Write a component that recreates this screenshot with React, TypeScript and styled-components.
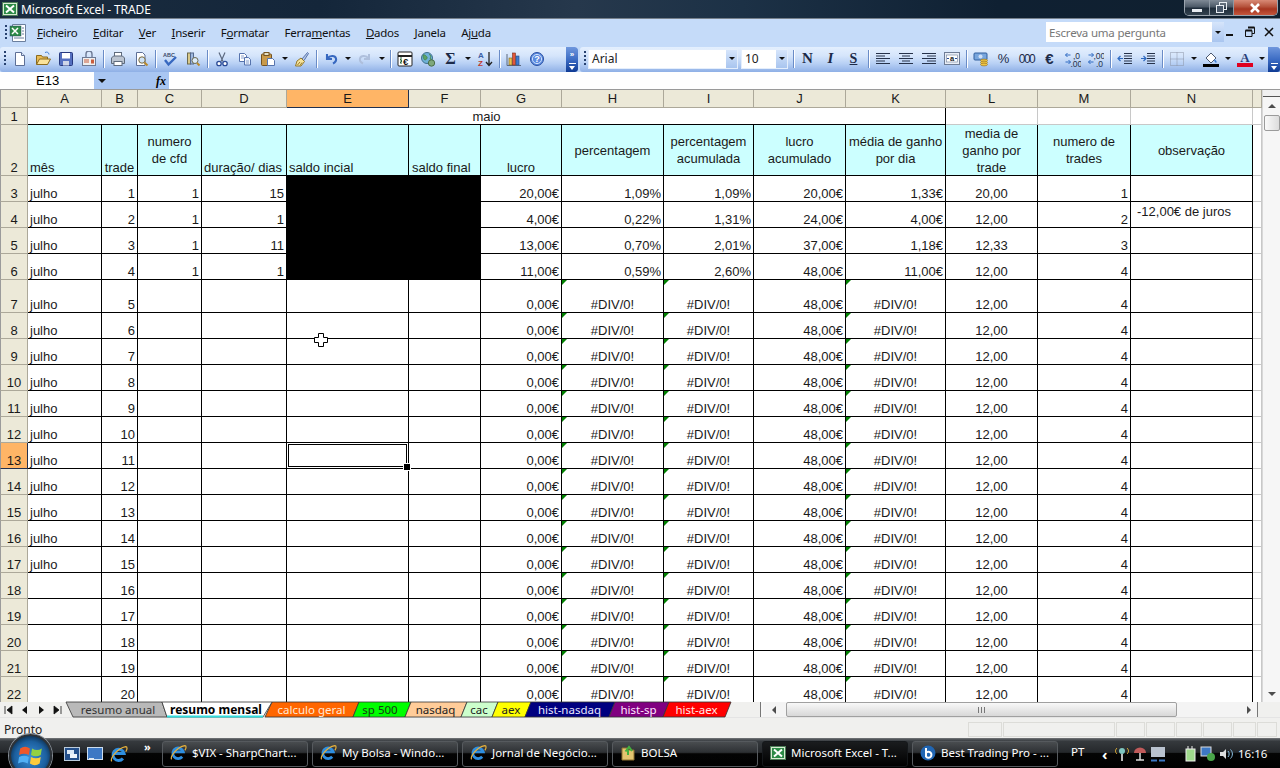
import * as React from 'react';
import styled, { createGlobalStyle } from 'styled-components';

const UI_FONT = '"Noto Sans", "DejaVu Sans", sans-serif';
const CELL_FONT = '"Liberation Sans", Arial, sans-serif';

const GlobalStyle = createGlobalStyle`
    html, body {
        margin: 0;
        padding: 0;
        background: #fff;
    }
    * {
        box-sizing: border-box;
    }
`;

const Page = styled.div`
    position: relative;
    display: flex;
    flex-direction: column;
    width: 1280px;
    height: 768px;
    overflow: hidden;
    font-family: ${UI_FONT};
    font-size: 11.5px;
    color: #000;
    background: #c3daf9;
`;

/* title bar */

const TitleBar = styled.div`
    display: flex;
    flex: none;
    align-items: center;
    height: 19px;
    padding-left: 2px;
    color: #fff;
    font-size: 12px;
    background: linear-gradient(90deg, #1a2c3f 0%, #14263a 25%, #26384c 45%, #1c3146 58%, #0f2032 78%, #10202f 100%);
    border-bottom: 1px solid #77818c;
`;

const TitleText = styled.span`
    margin-left: 3px;
    line-height: 17px;
    letter-spacing: -0.1px;
`;

const WindowButtons = styled.div`
    display: flex;
    align-self: flex-start;
    width: 94px;
    height: 16px;
    margin-left: auto;
    margin-right: 2px;
    overflow: hidden;
    border: 1px solid #9aa4ae;
    border-top: 0;
    border-radius: 0 0 5px 5px;
`;

const WindowButton = styled.div<{ $w: number; $close?: boolean }>`
    display: flex;
    align-items: center;
    justify-content: center;
    width: ${({ $w }) => $w}px;
    height: 100%;
    border-right: 1px solid #8d98a3;
    background: ${({ $close }) =>
        $close
            ? 'linear-gradient(180deg, #d88a76 0%, #b5523b 45%, #a63520 60%, #c5563c 100%)'
            : 'linear-gradient(180deg, #7f8a96 0%, #4d5a68 45%, #1e2c3a 55%, #33424f 100%)'};
    &:last-child {
        border-right: 0;
    }
`;

/* menu bar */

const MenuBar = styled.div`
    display: flex;
    flex: none;
    align-items: center;
    height: 28px;
    padding-left: 4px;
    background: #c5dbf9;
`;

const Menus = styled.div`
    display: flex;
    gap: 15.5px;
    margin-left: 8px;
    padding-bottom: 1px;
    line-height: 16px;
    letter-spacing: -0.25px;
    color: #111;
`;

const AskBox = styled.div`
    display: flex;
    align-items: center;
    justify-content: space-between;
    width: 178px;
    height: 20px;
    margin-left: auto;
    margin-bottom: 2px;
    padding-left: 3px;
    color: #777;
    font-size: 11.5px;
    letter-spacing: -0.2px;
    background: #fff;
`;

const ComboArrow = styled.div<{ $w?: number; $h?: number }>`
    display: flex;
    align-items: center;
    justify-content: center;
    width: ${({ $w }) => $w ?? 12}px;
    height: ${({ $h }) => ($h ? `${$h}px` : '100%')};
    background: linear-gradient(180deg, #d6e5fb, #a9c5ef);
    &::after {
        content: '';
        border-top: 3px solid #111;
        border-left: 3px solid transparent;
        border-right: 3px solid transparent;
    }
`;

const DocButtons = styled.div`
    display: flex;
    align-items: center;
    gap: 7px;
    margin: 0 5px 2px 1px;
`;

/* toolbars */

const ToolRow = styled.div`
    display: flex;
    flex: none;
    height: 25px;
    gap: 2px;
`;

const Toolbar = styled.div<{ $w?: number; $right?: boolean }>`
    display: flex;
    align-items: center;
    flex: ${({ $w }) => ($w ? 'none' : 1)};
    width: ${({ $w }) => ($w ? `${$w}px` : 'auto')};
    height: 25px;
    padding: 0 0 2px 3px;
    border-radius: ${({ $right }) => ($right ? '3px 0 0 3px' : '3px')};
    background: linear-gradient(180deg, #e4effe 0%, #d5e5fb 35%, #b9d1f5 65%, #8fb0e6 100%);
    overflow: hidden;
`;

const Grip = styled.div`
    flex: none;
    width: 2px;
    height: 16px;
    margin: 0 2px 0 1px;
    background: repeating-linear-gradient(180deg, #27416f 0 2px, transparent 2px 4px);
`;

const ToolButton = styled.div<{ $w?: number }>`
    display: flex;
    flex: none;
    align-items: center;
    justify-content: center;
    width: ${({ $w }) => $w ?? 23}px;
    height: 22px;
`;

const ToolText = styled(ToolButton)<{
    $font?: string;
    $size?: number;
    $bold?: boolean;
    $italic?: boolean;
    $tight?: boolean;
}>`
    font-family: ${({ $font }) => $font ?? CELL_FONT};
    font-size: ${({ $size }) => $size ?? 12}px;
    font-weight: ${({ $bold }) => ($bold ? 700 : 400)};
    font-style: ${({ $italic }) => ($italic ? 'italic' : 'normal')};
    letter-spacing: ${({ $tight }) => ($tight ? '-1.5px' : '0')};
    color: #1c2a48;
`;

const ToolSep = styled.div`
    flex: none;
    width: 1px;
    height: 18px;
    margin: 0 2.5px;
    background: #6a8cc7;
    box-shadow: 1px 0 0 #fff;
`;

const ToolDrop = styled.div`
    display: flex;
    flex: none;
    align-items: center;
    justify-content: center;
    width: 11px;
    height: 22px;
    &::after {
        content: '';
        border-top: 3px solid #111;
        border-left: 3px solid transparent;
        border-right: 3px solid transparent;
    }
`;

const ToolEnd = styled.div`
    display: flex;
    flex: none;
    flex-direction: column;
    align-items: center;
    justify-content: space-between;
    align-self: stretch;
    width: 12px;
    height: 25px;
    margin-left: auto;
    padding: 4px 0 3px;
    border-radius: 0 3px 3px 0;
    background: linear-gradient(180deg, #6f97dd 0%, #3c6cc4 50%, #0f3b94 100%);
`;

const EndChevron = styled.div`
    color: #fff;
    font: 700 8px/7px ${CELL_FONT};
`;

const EndArrow = styled.div`
    position: relative;
    width: 7px;
    height: 6px;
    border-top: 1px solid #fff;
    margin-top: auto;
    &::after {
        content: '';
        position: absolute;
        top: 2px;
        left: 0;
        border-top: 4px solid #fff;
        border-left: 3.5px solid transparent;
        border-right: 3.5px solid transparent;
    }
`;

const Combo = styled.div<{ $w: number; $gap: number }>`
    display: flex;
    flex: none;
    align-items: center;
    justify-content: space-between;
    width: ${({ $w }) => $w}px;
    height: 20px;
    margin-right: ${({ $gap }) => $gap}px;
    padding-left: 3px;
    font-size: 12px;
    color: #222;
    background: #fff;
    border: 1px solid #e4eefc;
`;

/* formula bar */

const FormulaBar = styled.div`
    display: flex;
    flex: none;
    height: 18px;
    background: #fff;
    border-bottom: 1px solid #9a9a9a;
`;

const NameBox = styled.div`
    display: flex;
    align-items: center;
    width: 94px;
    padding-left: 36px;
    font: 13px ${CELL_FONT};
`;

const NameArrow = styled.div`
    display: flex;
    align-items: center;
    width: 75px;
    padding-left: 4px;
    background: #a9c6f2;
    &::before {
        content: '';
        border-top: 4px solid #111;
        border-left: 4px solid transparent;
        border-right: 4px solid transparent;
    }
`;

const Fx = styled.span`
    margin-left: 50px;
    font: italic 700 12px/16px "Liberation Serif", serif;
`;

/* sheet */

const SheetArea = styled.div`
    display: flex;
    flex: none;
    height: 612px;
    background: #fff;
`;

const SheetGrid = styled.div`
    display: grid;
    flex: 1;
    height: 612px;
    overflow: hidden;
    grid-template-columns: 28px 74px 36px 64px 85px 122px 72px 81px 102px 90px 92px 100px 92px 93px 122px 9px;
    grid-template-rows: 18px 17px 51px repeat(4, 26px) 33px repeat(15, 26px);
    font: 13px/17px ${CELL_FONT};
    color: #1a1a1a;
`;

const Corner = styled.div`
    background: #ece9d8;
    border-right: 1px solid #aca899;
    border-bottom: 1px solid #aca899;
    border-left: 1px solid #9b9b9b;
`;

const ColHead = styled.div<{ $active?: boolean }>`
    display: flex;
    align-items: center;
    justify-content: center;
    background: ${({ $active }) => ($active ? '#ffb566' : '#ece9d8')};
    border-right: 1px solid ${({ $active }) => ($active ? '#21304f' : '#aca899')};
    border-bottom: 1px solid ${({ $active }) => ($active ? '#21304f' : '#aca899')};
    line-height: 16px;
`;

const RowHead = styled.div<{ $active?: boolean }>`
    display: flex;
    align-items: flex-end;
    justify-content: center;
    line-height: 15px;
    background: ${({ $active }) => ($active ? '#ffb566' : '#ece9d8')};
    border-right: 1px solid ${({ $active }) => ($active ? '#21304f' : '#aca899')};
    border-bottom: 1px solid ${({ $active }) => ($active ? '#21304f' : '#aca899')};
    border-left: 1px solid #9b9b9b;
`;

const Cell = styled.div<{
    $h?: 'left' | 'center' | 'right';
    $v?: 'top' | 'middle' | 'bottom';
    $fill?: string;
    $grey?: boolean;
    $span?: number;
    $flag?: boolean;
    $indent?: number;
}>`
    position: relative;
    display: flex;
    align-items: ${({ $v }) => ($v === 'middle' ? 'center' : $v === 'top' ? 'flex-start' : 'flex-end')};
    justify-content: ${({ $h }) => ($h === 'center' ? 'center' : $h === 'right' ? 'flex-end' : 'flex-start')};
    grid-column: span ${({ $span }) => $span ?? 1};
    padding: ${({ $v }) => ($v === 'top' ? '1px' : '0')} 2px 0 ${({ $indent }) => $indent ?? 2}px;
    line-height: ${({ $v }) => ($v ? 17 : 15)}px;
    text-align: center;
    white-space: pre;
    background: ${({ $fill }) => $fill ?? '#fff'};
    border-right: 1px solid ${({ $grey }) => ($grey ? '#c8c8c8' : '#000')};
    border-bottom: 1px solid ${({ $grey }) => ($grey ? '#c8c8c8' : '#000')};

    ${({ $flag }) =>
        $flag
            ? `&::before {
        content: '';
        position: absolute;
        top: 0;
        left: 0;
        border-top: 5px solid #008000;
        border-right: 5px solid transparent;
    }`
            : ''}
`;

const Selection = styled.div`
    position: absolute;
    top: 1px;
    left: 1px;
    right: 1px;
    bottom: 1px;
    border: 1px solid #000;
    box-shadow: 0 0 0 1px #fff;
    z-index: 2;
    &::after {
        content: '';
        position: absolute;
        right: -5px;
        bottom: -5px;
        width: 6px;
        height: 6px;
        background: #000;
        border: 1px solid #fff;
    }
`;

const Pointer = styled.svg`
    position: absolute;
    left: 313px;
    top: 332px;
    z-index: 3;
`;

const VScroll = styled.div`
    display: flex;
    flex: none;
    flex-direction: column;
    align-items: center;
    width: 18px;
    height: 612px;
    background: #f6f6f6;
    border-left: 1px solid #d8d8d8;
`;

const SplitBox = styled.div`
    width: 100%;
    height: 7px;
    background: #f0f0f0;
    border-bottom: 1px solid #555;
`;

const ScrollArrow = styled.div<{ $dir: 'up' | 'down' | 'left' | 'right' }>`
    display: flex;
    flex: none;
    align-items: center;
    justify-content: center;
    width: 17px;
    height: 17px;
    &::after {
        content: '';
        ${({ $dir }) =>
            $dir === 'up'
                ? 'border-bottom: 4px solid #4d4d4d; border-left: 4px solid transparent; border-right: 4px solid transparent;'
                : $dir === 'down'
                  ? 'border-top: 4px solid #4d4d4d; border-left: 4px solid transparent; border-right: 4px solid transparent;'
                  : $dir === 'left'
                    ? 'border-right: 4px solid #4d4d4d; border-top: 4px solid transparent; border-bottom: 4px solid transparent;'
                    : 'border-left: 4px solid #4d4d4d; border-top: 4px solid transparent; border-bottom: 4px solid transparent;'}
    }
`;

const VThumb = styled.div`
    flex: none;
    width: 16px;
    height: 16px;
    margin-top: 1px;
    border: 1px solid #9b9b9b;
    border-radius: 2px;
    background: linear-gradient(90deg, #fafafa, #dcdcdc);
`;

const VSpacer = styled.div`
    flex: 1;
`;

/* tabs and horizontal scrollbar */

const TabRow = styled.div`
    display: flex;
    flex: none;
    align-items: stretch;
    height: 16px;
    background: #f0f0ee;
    border-bottom: 1px solid #e4e4e4;
`;

const TabNav = styled.div`
    display: flex;
    flex: none;
    align-items: center;
    width: 66px;
    padding-left: 1px;
`;

const NavButton = styled.svg`
    flex: none;
    width: 16px;
    height: 10px;
`;

const Tab = styled.div<{ $w: number; $shift: number; $color: string; $active?: boolean }>`
    position: relative;
    display: flex;
    flex: none;
    align-items: center;
    justify-content: center;
    width: ${({ $w }) => $w}px;
    padding-left: ${({ $shift }) => Math.max($shift, 0)}px;
    padding-right: ${({ $shift }) => Math.max(-$shift, 0)}px;
    font-size: ${({ $active }) => ($active ? 12 : 11.5)}px;
    font-weight: ${({ $active }) => ($active ? 700 : 400)};
    line-height: 15px;
    color: ${({ $color }) => $color};
    z-index: ${({ $active }) => ($active ? 1 : 0)};
    white-space: nowrap;
`;

const TabLabel = styled.span`
    position: relative;
`;

const TabShape = styled.svg`
    position: absolute;
    top: 0;
    left: 0;
    overflow: visible;
`;

const TabFill = styled.div`
    flex: 1;
`;

const Splitter = styled.div`
    flex: none;
    width: 3px;
    background: #f7f7f7;
    border-left: 1px solid #777;
`;

const HScroll = styled.div`
    display: flex;
    flex: none;
    align-items: center;
    width: 494px;
    padding-left: 2px;
    background: #f4f4f4;
`;

const HThumb = styled.div`
    display: flex;
    flex: none;
    align-items: center;
    justify-content: center;
    width: 391px;
    height: 15px;
    margin-left: 4px;
    border: 1px solid #a0a0a0;
    border-radius: 2px;
    background: linear-gradient(180deg, #f8f8f8, #d8d8d8);
`;

const ThumbGrip = styled.div`
    width: 7px;
    height: 6px;
    background: repeating-linear-gradient(90deg, #777 0 1px, transparent 1px 3px);
`;

const HTrackFill = styled.div`
    flex: 1;
`;

const ResizeBox = styled.div`
    display: flex;
    flex: none;
    width: 23px;
    border-left: 1px solid #777;
    background: #f0f0ee;
`;

/* status bar */

const StatusBar = styled.div`
    display: flex;
    flex: none;
    align-items: flex-end;
    height: 20px;
    padding: 0 3px 1px 4px;
    font-size: 12px;
    background: #f0f0ee;
`;

const StatusText = styled.span`
    margin-right: auto;
    margin-bottom: -1px;
    line-height: 16px;
    color: #222;
`;

const StatusPanel = styled.div<{ $w: number }>`
    flex: none;
    width: ${({ $w }) => $w}px;
    height: 15px;
    margin-left: 1px;
    border: 1px solid #dcdcd8;
`;

/* taskbar */

const Taskbar = styled.div`
    position: relative;
    display: flex;
    flex: none;
    align-items: center;
    height: 30px;
    padding-left: 64px;
    color: #fff;
    font-size: 11.5px;
    background: linear-gradient(180deg, #585c60 0%, #35393d 8%, #25282b 46%, #050505 50%, #000 100%);
    border-top: 1px solid #6a6d70;
`;

const StartOrb = styled.div`
    position: absolute;
    left: 9px;
    top: -5px;
    display: flex;
    align-items: center;
    justify-content: center;
    width: 43px;
    height: 43px;
    border-radius: 50%;
    border: 2px solid #2c3238;
    box-shadow: 0 0 0 1px #8a929a;
    background: radial-gradient(circle at 50% 55%, #3a8fd8 0%, #1c5f9e 55%, #0b2a47 80%, #0e1a26 100%);
`;

const QuickLaunch = styled.div`
    display: flex;
    flex: none;
    align-items: center;
    gap: 7px;
    width: 98px;
`;

const Chevrons = styled.span`
    margin-left: 9px;
    font-size: 11px;
    font-weight: 700;
    line-height: 10px;
    transform: translateY(-7px);
`;

const TaskButton = styled.div<{ $active?: boolean }>`
    display: flex;
    flex: none;
    align-items: center;
    gap: 5px;
    width: 146px;
    height: 26px;
    margin-right: 4px;
    padding: 0 0 2px 7px;
    white-space: nowrap;
    border: 1px solid ${({ $active }) => ($active ? '#15181b' : '#565a5e')};
    border-radius: 3px;
    background: ${({ $active }) =>
        $active
            ? 'linear-gradient(180deg, #1a1c1e, #000)'
            : 'linear-gradient(180deg, rgba(255,255,255,0.1) 0%, rgba(255,255,255,0.03) 48%, rgba(0,0,0,0.2) 52%, rgba(0,0,0,0.2) 100%)'};
`;

const Tray = styled.div`
    display: flex;
    flex: 1;
    align-items: center;
    margin-left: 9px;
`;

const TrayLang = styled.span`
    width: 31px;
    transform: translateY(-2px);
`;

const TrayBack = styled.span`
    width: 12px;
    font-size: 15px;
    font-weight: 700;
`;

const TrayIcons = styled.div<{ $w: number }>`
    display: flex;
    flex: none;
    gap: 2px;
    width: ${({ $w }) => $w}px;
`;

const Clock = styled.span`
    margin-left: 2px;
`;

/* drawings */

const Svg = ({ children, size = 16 }: { children: React.ReactNode; size?: number }) => (
    <svg width={size} height={size} viewBox="0 0 16 16">
        {children}
    </svg>
);

const ExcelLogo = ({ size = 16 }: { size?: number }) => (
    <Svg size={size}>
        <rect x="0.5" y="1.5" width="15" height="13" fill="#d7ecd2" stroke="#4f7f5a" />
        <rect x="2" y="3" width="12" height="10" fill="#2c8a46" />
        <path d="M4 4.5 L12 11.5 M12 4.5 L4 11.5" stroke="#fff" strokeWidth="2" />
    </Svg>
);

const IeLogo = ({ size = 16 }: { size?: number }) => (
    <Svg size={size}>
        <path d="M3 7.5 H12.5 A5 5 0 1 0 11.5 12" fill="none" stroke="#2f8fe0" strokeWidth="2.6" />
        <path d="M1.5 14.5 C0 12 6 3 14 1.5 C15.5 1.5 15.5 3.5 14 6" fill="none" stroke="#e7b23d" strokeWidth="1.1" />
    </Svg>
);

const ExcelDocIcon = () => (
    <svg width="20" height="20" viewBox="0 0 20 20">
        <path d="M3.5 1.5h13v17h-13z" fill="#fff" stroke="#6b7f9e" />
        <rect x="1" y="3" width="11" height="10" fill="#2c8a46" stroke="#246" strokeWidth="0.5" />
        <path d="M3 5l6 6M9 5l-6 6" stroke="#fff" strokeWidth="1.5" />
        <path d="M13 5h2M13 8h2M13 11h2M5 15h10" stroke="#6b7f9e" />
    </svg>
);

const icons: Record<string, React.ReactNode> = {
    newDoc: (
        <>
            <path d="M3.5 1.5h6l3 3v10h-9z" fill="#fff" stroke="#5d6f96" />
            <path d="M9.5 1.5v3h3" fill="#dfe8f7" stroke="#5d6f96" />
        </>
    ),
    open: (
        <>
            <path d="M1.5 4.5h5l1 1.5h5v7h-11z" fill="#e9bb56" stroke="#8a6a1d" />
            <path d="M1.5 13.5l3-5.5h11l-3 5.5z" fill="#fbe39a" stroke="#8a6a1d" />
            <path d="M10 1.5c2-1 4 0 4 2" fill="none" stroke="#3e7bd0" />
        </>
    ),
    save: (
        <>
            <rect x="1.5" y="1.5" width="13" height="13" rx="1" fill="#5570c0" stroke="#27397f" />
            <rect x="4" y="2" width="8" height="5.5" fill="#fff" />
            <rect x="5" y="10" width="6" height="4.5" fill="#cfd6e8" />
        </>
    ),
    mail: (
        <>
            <path d="M5 6V3a3 3 0 0 1 6 0v3" fill="none" stroke="#6d7a94" strokeWidth="1.4" />
            <rect x="1.5" y="6.5" width="13" height="8" fill="#eee" stroke="#6d7a94" />
            <path d="M3 9h5M3 11h5" stroke="#c95d3d" />
            <rect x="10" y="8.5" width="3" height="4" fill="#c95d3d" />
        </>
    ),
    print: (
        <>
            <rect x="4.5" y="1.5" width="7" height="5" fill="#fff" stroke="#5f6b7c" />
            <path d="M1.5 7l2-2h9l2 2v5.5h-13z" fill="#bcc5d1" stroke="#5f6b7c" />
            <rect x="4" y="10.5" width="8" height="4" fill="#fff" stroke="#5f6b7c" />
        </>
    ),
    preview: (
        <>
            <path d="M3.5 1.5h6l2.5 2.5v10.5h-8.5z" fill="#fff" stroke="#5d6f96" />
            <circle cx="9" cy="9" r="3.2" fill="#cfe3f7" stroke="#7b6a3b" />
            <path d="M11.5 11.5l3 3" stroke="#b98a2b" strokeWidth="2" />
        </>
    ),
    spell: (
        <>
            <text x="1" y="5.5" fontFamily={CELL_FONT} fontSize="5.5" fontWeight="700" fill="#3a4a6a">
                ABC
            </text>
            <path d="M3 9l3.5 4.5L14 6" fill="none" stroke="#3768c0" strokeWidth="2.4" />
        </>
    ),
    research: (
        <>
            <rect x="2.5" y="2" width="3" height="11" fill="#d8c98a" stroke="#6d6a4d" />
            <rect x="5.5" y="2" width="3" height="11" fill="#9fb9df" stroke="#55698d" />
            <circle cx="10" cy="9.5" r="3" fill="#dcebf9" stroke="#6d6a4d" />
            <path d="M12 12l2.5 2.5" stroke="#b98a2b" strokeWidth="2" />
        </>
    ),
    cut: (
        <>
            <path d="M5 1.5l4 9M11 1.5l-4 9" stroke="#5d6a80" strokeWidth="1.2" />
            <circle cx="5" cy="12.5" r="2.2" fill="#fff" stroke="#2a4a96" strokeWidth="1.3" />
            <circle cx="11" cy="12.5" r="2.2" fill="#fff" stroke="#2a4a96" strokeWidth="1.3" />
        </>
    ),
    copy: (
        <>
            <path d="M2.5 2.5h5l2 2v6h-7z" fill="#fff" stroke="#5673ad" />
            <path d="M7.5 6.5h4l2 2v5.5h-6z" fill="#eef4fd" stroke="#5673ad" />
            <path d="M4 5h3M4 7h3M9 10h3M9 12h3" stroke="#8aa1cc" />
        </>
    ),
    paste: (
        <>
            <rect x="1.5" y="3" width="10" height="11.5" rx="1" fill="#c99a4b" stroke="#745320" />
            <rect x="4" y="1.5" width="5" height="3" fill="#e6e0c6" stroke="#745320" />
            <path d="M7.5 7.5h5l2 2v5h-7z" fill="#fff" stroke="#5673ad" />
        </>
    ),
    painter: (
        <>
            <path d="M8 8L13.5 1.5l1 1L10 9.5" fill="#b6c7e4" stroke="#5673ad" />
            <path d="M3 10l4-3 3.5 3.5-3.5 4.5H1.5z" fill="#f6e39a" stroke="#94782c" />
            <path d="M3.5 14l2.5-3M6 14.5l2-3" stroke="#94782c" />
        </>
    ),
    undo: (
        <path d="M4 3v5h5M4.5 7.5c2-3 7.5-3.5 8.5 0 .6 2.4-1 4-3 5" fill="none" stroke="#3768c0" strokeWidth="2.1" />
    ),
    redo: (
        <path d="M12 3v5H7M11.5 7.5c-2-3-7.5-3.5-8.5 0-.6 2.4 1 4 3 5" fill="none" stroke="#aebfdc" strokeWidth="2" />
    ),
    euroDoc: (
        <>
            <rect x="1" y="1" width="14" height="14" rx="1" fill="#fff" stroke="#222" />
            <path d="M1 5h14" stroke="#222" strokeWidth="2" />
            <text x="6" y="14" fontFamily={CELL_FONT} fontSize="9.5" fontWeight="700" fill="#111">
                €
            </text>
            <path d="M3 8l2 2-2 2M4 6v7" fill="none" stroke="#2d6b42" />
        </>
    ),
    globe: (
        <>
            <circle cx="7" cy="7" r="5.5" fill="#6fb2d8" stroke="#3f6f8d" />
            <path d="M3 4c2-1 3 1 4 2s-1 3-2 3-2-2-2-5zM9 3l2 2-1 3 2 1" fill="#5aa364" stroke="#3d7a48" strokeWidth="0.6" />
            <circle cx="11.5" cy="12" r="3.2" fill="#7fa87b" stroke="#4a6e4a" />
        </>
    ),
    sort: (
        <>
            <text x="1" y="7" fontFamily={CELL_FONT} fontSize="8" fontWeight="700" fill="#3a5fa6">
                A
            </text>
            <text x="1" y="15" fontFamily={CELL_FONT} fontSize="8" fontWeight="700" fill="#c0392b">
                Z
            </text>
            <path d="M12 1v13M9 11l3 3.5 3-3.5" fill="none" stroke="#222" strokeWidth="1.3" />
        </>
    ),
    chart: (
        <>
            <path d="M1 14.5h14" stroke="#5d6a80" />
            <path d="M1 14.5V3" stroke="#5d6a80" />
            <rect x="3" y="7" width="3" height="7" fill="#e9c04e" stroke="#7a6320" strokeWidth="0.6" />
            <rect x="6.5" y="2" width="3" height="12" fill="#e2563a" stroke="#7a2d1a" strokeWidth="0.6" />
            <rect x="10" y="5" width="3" height="9" fill="#3e7bd0" stroke="#244c86" strokeWidth="0.6" />
        </>
    ),
    help: (
        <>
            <circle cx="8" cy="8" r="6.5" fill="#5b8be0" stroke="#2a4fa0" />
            <circle cx="8" cy="8" r="4.6" fill="none" stroke="#cfe0fb" />
            <text x="8" y="11" textAnchor="middle" fontFamily={CELL_FONT} fontSize="9" fontWeight="700" fill="#fff">
                ?
            </text>
        </>
    ),
    alignLeft: <path d="M1 2.5h14M1 5h9M1 7.5h14M1 10h9M1 12.5h14" stroke="#26324a" />,
    alignCenter: <path d="M1 2.5h14M4 5h8M1 7.5h14M4 10h8M1 12.5h14" stroke="#26324a" />,
    alignRight: <path d="M1 2.5h14M6 5h9M1 7.5h14M6 10h9M1 12.5h14" stroke="#26324a" />,
    merge: (
        <>
            <rect x="0.5" y="1.5" width="15" height="12" fill="#e9eef7" stroke="#6f7d96" />
            <rect x="2.5" y="4" width="11" height="7" fill="#fff" stroke="#6f7d96" strokeWidth="0.6" />
            <text x="8" y="10" textAnchor="middle" fontFamily={CELL_FONT} fontSize="7.5" fontWeight="700" fill="#222">
                a
            </text>
            <path d="M3 7.5h2M11 7.5h2" stroke="#2a4a96" />
        </>
    ),
    currency: (
        <>
            <rect x="1" y="2" width="13" height="7" rx="1" fill="#78a6dd" stroke="#305f9e" />
            <circle cx="7.5" cy="5.5" r="2" fill="#cfe0f7" />
            <ellipse cx="11" cy="9.5" rx="3.5" ry="1.4" fill="#f0c445" stroke="#8d6b17" strokeWidth="0.6" />
            <ellipse cx="11" cy="11.5" rx="3.5" ry="1.4" fill="#f0c445" stroke="#8d6b17" strokeWidth="0.6" />
            <ellipse cx="11" cy="13.5" rx="3.5" ry="1.4" fill="#f0c445" stroke="#8d6b17" strokeWidth="0.6" />
        </>
    ),
    incDecimal: (
        <>
            <path d="M0.5 4h5M2.500 2L0.500 4l2 2" fill="none" stroke="#2f6bc2" />
            <path d="M0.5 11h5M3.500 9l2 2-2 2" fill="none" stroke="#2f6bc2" />
            <text x="8" y="7.500" fontFamily={CELL_FONT} fontSize="8.5" fill="#26324a">
                ,0
            </text>
            <text x="5.500" y="15.500" fontFamily={CELL_FONT} fontSize="8.5" fill="#26324a">
                ,00
            </text>
        </>
    ),
    decDecimal: (
        <>
            <path d="M0.5 4h5M3.500 2l2 2-2 2" fill="none" stroke="#2f6bc2" />
            <path d="M0.5 11h5M2.500 9L0.500 11l2 2" fill="none" stroke="#2f6bc2" />
            <text x="5.500" y="7.500" fontFamily={CELL_FONT} fontSize="8.5" fill="#26324a">
                ,00
            </text>
            <text x="8" y="15.500" fontFamily={CELL_FONT} fontSize="8.5" fill="#26324a">
                ,0
            </text>
        </>
    ),
    outdent: (
        <>
            <path d="M7 2.5h8M7 5h8M7 7.5h8M7 10h8M7 12.5h8" stroke="#26324a" />
            <path d="M6 7.5H1M3.5 5L1 7.5 3.5 10" fill="none" stroke="#2f6bc2" strokeWidth="1.2" />
        </>
    ),
    indent: (
        <>
            <path d="M7 2.5h8M7 5h8M7 7.5h8M7 10h8M7 12.5h8" stroke="#26324a" />
            <path d="M1 7.5h5M3.5 5L6 7.5 3.5 10" fill="none" stroke="#2f6bc2" strokeWidth="1.2" />
        </>
    ),
    borders: (
        <path d="M1.5 1.5h13v13h-13zM8 1.5v13M1.5 8h13" fill="none" stroke="#8a93a5" strokeDasharray="1 1" />
    ),
    fill: (
        <>
            <path d="M3 7l5-5 5 5-5 5z" fill="#fff" stroke="#4d5a70" />
            <path d="M11 8c2 1 3 2.5 2.5 3.5S11 11 11 8z" fill="#3e7bd0" />
            <rect x="0" y="13" width="16" height="3" fill="#000" />
        </>
    ),
    fontColor: (
        <>
            <text x="8" y="11" textAnchor="middle" fontFamily='"Liberation Serif", serif' fontSize="13" fontWeight="700" fill="#2a3f78">
                A
            </text>
            <rect x="0" y="12" width="16" height="4" fill="#e00020" />
        </>
    ),
};

const mainTools = [
    'newDoc', 'open', 'save', 'mail', '|', 'print', 'preview', '|', 'spell', 'research', '|',
    'cut', 'copy', 'paste', 'v', 'painter', '|', 'undo', 'v', 'redo', 'v', '|', 'euroDoc', 'globe',
    'sigma', 'v', 'sort', '|', 'chart', 'help',
];

const formatTools = [
    'bold', 'italic', 'under', '|', 'alignLeft', 'alignCenter', 'alignRight', 'merge', '|', 'currency',
    'percent', 'thousand', 'euro', 'incDecimal', 'decDecimal', '|', 'outdent', 'indent', '|', 'borders',
    'v', 'fill', 'v', 'fontColor', 'v',
];

const SERIF = '"Liberation Serif", serif';

const renderTool = (t: string, i: number) => {
    if (t === '|') return <ToolSep key={i} />;
    if (t === 'v') return <ToolDrop key={i} />;
    if (t === 'sigma') return <ToolText key={i} $font={SERIF} $size={16} $bold>Σ</ToolText>;
    if (t === 'bold') return <ToolText key={i} $font={SERIF} $size={15} $bold>N</ToolText>;
    if (t === 'italic') return <ToolText key={i} $font={SERIF} $size={15} $bold $italic>I</ToolText>;
    if (t === 'under') return <ToolText key={i} $font={SERIF} $size={14} $bold><u>S</u></ToolText>;
    if (t === 'percent') return <ToolText key={i} $size={13}>%</ToolText>;
    if (t === 'thousand') return <ToolText key={i} $size={12} $tight>000</ToolText>;
    if (t === 'euro') return <ToolText key={i} $size={15} $bold>€</ToolText>;
    return (
        <ToolButton key={i}>
            <Svg>{icons[t]}</Svg>
        </ToolButton>
    );
};

/* data */

const columns = ['A', 'B', 'C', 'D', 'E', 'F', 'G', 'H', 'I', 'J', 'K', 'L', 'M', 'N'];

const early = [
    { c: '1', d: '15', g: '20,00€', h: '1,09%', i: '1,09%', j: '20,00€', k: '1,33€', l: '20,00', m: '1' },
    { c: '1', d: '1', g: '4,00€', h: '0,22%', i: '1,31%', j: '24,00€', k: '4,00€', l: '12,00', m: '2' },
    { c: '1', d: '11', g: '13,00€', h: '0,70%', i: '2,01%', j: '37,00€', k: '1,18€', l: '12,33', m: '3' },
    { c: '1', d: '1', g: '11,00€', h: '0,59%', i: '2,60%', j: '48,00€', k: '11,00€', l: '12,00', m: '4' },
];

const emptyRow = { c: '', d: '', g: '0,00€', h: '#DIV/0!', i: '#DIV/0!', j: '48,00€', k: '#DIV/0!', l: '12,00', m: '4' };

const rowNumbers = Array.from({ length: 20 }, (_, i) => i + 3);

const tabs = [
    { name: 'resumo anual', w: 96, l: 7, r: 5, s: 8, bg: '#b9b9b9', fg: '#333' },
    { name: 'resumo mensal', w: 110, l: 5, r: -9, s: -2, bg: '#ffffff', fg: '#000', active: true },
    { name: 'calculo geral', w: 87, l: -7, r: -6, s: -8, bg: '#ff6600', fg: '#ffe9d6' },
    { name: 'sp 500', w: 52, l: -6, r: -6, s: -10, bg: '#00ff00', fg: '#163a16' },
    { name: 'nasdaq', w: 56, l: -6, r: -6, s: -7, bg: '#ffcc99', fg: '#222' },
    { name: 'cac', w: 31, l: -6, r: -6, s: -7, bg: '#ccffcc', fg: '#222' },
    { name: 'aex', w: 33, l: -6, r: -6, s: -7, bg: '#ffff00', fg: '#222' },
    { name: 'hist-nasdaq', w: 84, l: -6, r: -6, s: -7, bg: '#000080', fg: '#e8e8ff' },
    { name: 'hist-sp', w: 54, l: -6, r: -6, s: -7, bg: '#800080', fg: '#ffe8ff' },
    { name: 'hist-aex', w: 62, l: -6, r: -6, s: -7, bg: '#ff0000', fg: '#ffe8e8' },
];

const tasks = [
    { icon: 'ie', label: '$VIX - SharpChart...' },
    { icon: 'ie', label: 'My Bolsa - Windo...' },
    { icon: 'ie', label: 'Jornal de Negócio...' },
    { icon: 'folder', label: 'BOLSA' },
    { icon: 'excel', label: 'Microsoft Excel - T...', active: true },
    { icon: 'b', label: 'Best Trading Pro - ...' },
];

const TaskIcon = ({ kind }: { kind: string }) => {
    if (kind === 'ie') return <IeLogo size={17} />;
    if (kind === 'excel') return <ExcelLogo size={16} />;
    if (kind === 'folder')
        return (
            <Svg>
                <path d="M2 3h5l1 2h6v10H2z" fill="#e3c46f" stroke="#8d7130" />
                <path d="M8 10V5M5.5 6.5L9 2l3 4" fill="none" stroke="#45b03f" strokeWidth="2" />
            </Svg>
        );
    return (
        <Svg>
            <circle cx="8" cy="8" r="7.5" fill="#2166b3" />
            <path d="M6 3v9M6 8a3 3 0 1 1 0 3.5" fill="none" stroke="#fff" strokeWidth="2" />
        </Svg>
    );
};

const SheetRow = ({ row }: { row: number }) => {
    const top = early[row - 3];
    const data = top ?? emptyRow;
    const flagged = !top;
    const align = top ? 'right' : 'center';
    return (
        <>
            <RowHead $active={row === 13}>{row}</RowHead>
            <Cell>{row <= 17 ? 'julho' : ''}</Cell>
            <Cell $h="right">{row - 2}</Cell>
            <Cell $h="right">{data.c}</Cell>
            <Cell $h="right">{data.d}</Cell>
            <Cell $fill={top ? '#000' : undefined}>{row === 13 ? <Selection /> : null}</Cell>
            <Cell $fill={top ? '#000' : undefined} />
            <Cell $h="right">{data.g}</Cell>
            <Cell $h={align} $flag={flagged}>{data.h}</Cell>
            <Cell $h={align} $flag={flagged}>{data.i}</Cell>
            <Cell $h="right">{data.j}</Cell>
            <Cell $h={align} $flag={flagged}>{data.k}</Cell>
            <Cell $h="center">{data.l}</Cell>
            <Cell $h="right">{data.m}</Cell>
            <Cell $v="top" $indent={6}>{row === 4 ? '-12,00€ de juros' : ''}</Cell>
            <Cell $grey />
        </>
    );
};

const App = () => (
    <Page>
        <GlobalStyle />
        <TitleBar>
            <ExcelLogo />
            <TitleText>Microsoft Excel - TRADE</TitleText>
            <WindowButtons>
                <WindowButton $w={26}>
                    <svg width="12" height="8" viewBox="0 0 12 8">
                        <rect x="1" y="5" width="10" height="3" fill="#e8edf2" />
                    </svg>
                </WindowButton>
                <WindowButton $w={24}>
                    <svg width="11" height="11" viewBox="0 0 11 11">
                        <rect x="3.5" y="0.5" width="7" height="7" fill="none" stroke="#e8edf2" />
                        <rect x="0.5" y="3.5" width="7" height="7" fill="#49586a" stroke="#e8edf2" />
                    </svg>
                </WindowButton>
                <WindowButton $w={44} $close>
                    <svg width="12" height="10" viewBox="0 0 12 10">
                        <path d="M2 1l8 8M10 1l-8 8" stroke="#fff" strokeWidth="2.6" />
                    </svg>
                </WindowButton>
            </WindowButtons>
        </TitleBar>
        <MenuBar>
            <Grip />
            <ExcelDocIcon />
            <Menus>
                <span><u>F</u>icheiro</span>
                <span><u>E</u>ditar</span>
                <span><u>V</u>er</span>
                <span><u>I</u>nserir</span>
                <span>F<u>o</u>rmatar</span>
                <span>Ferra<u>m</u>entas</span>
                <span><u>D</u>ados</span>
                <span><u>J</u>anela</span>
                <span>Aj<u>u</u>da</span>
            </Menus>
            <AskBox>
                Escreva uma pergunta
                <ComboArrow />
            </AskBox>
            <DocButtons>
                <svg width="12" height="12" viewBox="0 0 12 12">
                    <rect x="1" y="8" width="7" height="2" fill="#111" />
                </svg>
                <svg width="12" height="12" viewBox="0 0 12 12">
                    <path d="M4 1.5h6.5v6H8M1.5 4.5H8v6H1.5z" fill="none" stroke="#111" />
                    <path d="M4 1.5h6.5M1.5 4.5H8" stroke="#111" strokeWidth="2" />
                </svg>
                <svg width="12" height="12" viewBox="0 0 12 12">
                    <path d="M2 2l8 8M10 2l-8 8" stroke="#111" strokeWidth="1.5" />
                </svg>
            </DocButtons>
        </MenuBar>
        <ToolRow>
            <Toolbar $w={578}>
                <Grip />
                {mainTools.map(renderTool)}
                <ToolEnd>
                    <EndChevron>»</EndChevron>
                    <EndArrow />
                </ToolEnd>
            </Toolbar>
            <Toolbar $right>
                <Grip />
                <Combo $w={150} $gap={3}>
                    Arial
                    <ComboArrow $w={11} $h={18} />
                </Combo>
                <Combo $w={47} $gap={2}>
                    10
                    <ComboArrow $w={11} $h={18} />
                </Combo>
                <ToolSep />
                {formatTools.map(renderTool)}
                <ToolEnd>
                    <EndArrow />
                </ToolEnd>
            </Toolbar>
        </ToolRow>
        <FormulaBar>
            <NameBox>E13</NameBox>
            <NameArrow>
                <Fx>fx</Fx>
            </NameArrow>
        </FormulaBar>
        <SheetArea>
            <SheetGrid>
                <Corner />
                {columns.map(c => (
                    <ColHead key={c} $active={c === 'E'}>{c}</ColHead>
                ))}
                <ColHead />
                <RowHead>1</RowHead>
                <Cell $span={11} $h="center" $v="middle">maio</Cell>
                <Cell $grey />
                <Cell $grey />
                <Cell $grey />
                <Cell $grey />
                <RowHead>2</RowHead>
                <Cell $fill="#ccffff">mês</Cell>
                <Cell $fill="#ccffff" $h="center">trade</Cell>
                <Cell $fill="#ccffff" $h="center" $v="middle">{'numero\nde cfd'}</Cell>
                <Cell $fill="#ccffff">duração/ dias</Cell>
                <Cell $fill="#ccffff">saldo incial</Cell>
                <Cell $fill="#ccffff" $indent={3}>saldo final</Cell>
                <Cell $fill="#ccffff" $h="center">lucro</Cell>
                <Cell $fill="#ccffff" $h="center" $v="middle">percentagem</Cell>
                <Cell $fill="#ccffff" $h="center" $v="middle">{'percentagem\nacumulada'}</Cell>
                <Cell $fill="#ccffff" $h="center" $v="middle">{'lucro\nacumulado'}</Cell>
                <Cell $fill="#ccffff" $h="center" $v="middle">{'média de ganho\npor dia'}</Cell>
                <Cell $fill="#ccffff" $h="center" $v="middle">{'media de\nganho por\ntrade'}</Cell>
                <Cell $fill="#ccffff" $h="center" $v="middle">{'numero de\ntrades'}</Cell>
                <Cell $fill="#ccffff" $h="center" $v="middle">observação</Cell>
                <Cell $grey />
                {rowNumbers.map(r => (
                    <SheetRow key={r} row={r} />
                ))}
            </SheetGrid>
            <VScroll>
                <SplitBox />
                <ScrollArrow $dir="up" />
                <VThumb />
                <VSpacer />
                <ScrollArrow $dir="down" />
            </VScroll>
        </SheetArea>
        <TabRow>
            <TabNav>
                <NavButton viewBox="0 0 16 10">
                    <path d="M4 1v8M11 1L6 5l5 4z" fill="#111" stroke="#111" strokeWidth="0.8" />
                </NavButton>
                <NavButton viewBox="0 0 16 10">
                    <path d="M10 1L5 5l5 4z" fill="#111" />
                </NavButton>
                <NavButton viewBox="0 0 16 10">
                    <path d="M6 1l5 4-5 4z" fill="#111" />
                </NavButton>
                <NavButton viewBox="0 0 16 10">
                    <path d="M12 1v8M5 1l5 4-5 4z" fill="#111" stroke="#111" strokeWidth="0.8" />
                </NavButton>
            </TabNav>
            {tabs.map(t => (
                <Tab key={t.name} $w={t.w} $shift={t.s} $color={t.fg} $active={t.active}>
                    <TabShape width={t.w} height="15">
                        <polygon points={`0,0 ${t.w},0 ${t.w + t.r},15 ${t.l},15`} fill={t.bg} stroke="#333" strokeWidth="0.8" />
                        {t.active ? <path d={`M${t.l} 14.5 H${t.w + t.r}`} stroke="#33dddd" strokeWidth="2" /> : null}
                    </TabShape>
                    <TabLabel>{t.name}</TabLabel>
                </Tab>
            ))}
            <TabFill />
            <Splitter />
            <HScroll>
                <ScrollArrow $dir="left" />
                <HThumb>
                    <ThumbGrip />
                </HThumb>
                <HTrackFill />
                <ScrollArrow $dir="right" />
            </HScroll>
            <ResizeBox />
        </TabRow>
        <StatusBar>
            <StatusText>Pronto</StatusText>
            {[34, 112, 29, 29, 26, 29, 23, 20].map((w, i) => (
                <StatusPanel key={i} $w={w} />
            ))}
        </StatusBar>
        <Taskbar>
            <StartOrb>
                <svg width="26" height="24" viewBox="0 0 24 22">
                    <path d="M2 4c3-2 6-2 9 0l-1 6c-3-1.5-6-1.5-9 0z" fill="#f0582a" />
                    <path d="M13 4c3 2 6 2 9 0l-1 6c-3 1.5-6 1.5-9 0z" fill="#93d143" />
                    <path d="M1 12c3-1.5 6-1.5 9 0l-1 6c-3-2-6-2-9 0z" fill="#52b0f5" />
                    <path d="M12 12c3 1.5 6 1.5 9 0l-1 6c-3 2-6 2-9 0z" fill="#fccb3e" />
                </svg>
            </StartOrb>
            <QuickLaunch>
                <svg width="16" height="14" viewBox="0 0 16 14">
                    <rect x="0.5" y="0.5" width="15" height="13" fill="#24508c" stroke="#bcd" />
                    <rect x="3" y="3" width="7" height="4" fill="#dce9f7" />
                    <rect x="6" y="7" width="7" height="4" fill="#eef4fb" />
                </svg>
                <svg width="16" height="14" viewBox="0 0 16 14">
                    <rect x="0.5" y="0.5" width="15" height="12" fill="#3d78c4" stroke="#cde" />
                    <rect x="2" y="11" width="5" height="2" fill="#dfe8f2" />
                </svg>
                <IeLogo size={18} />
                <Chevrons>»</Chevrons>
            </QuickLaunch>
            {tasks.map(t => (
                <TaskButton key={t.label} $active={t.active}>
                    <TaskIcon kind={t.icon} />
                    {t.label}
                </TaskButton>
            ))}
            <Tray>
                <TrayLang>PT</TrayLang>
                <TrayBack>‹</TrayBack>
                <TrayIcons $w={68}>
                    <Svg>
                        <circle cx="8" cy="5" r="3" fill="#7fc6c0" />
                        <path d="M8 8v7" stroke="#bbb" strokeWidth="2" />
                        <path d="M3 2c-2 2-2 4 0 6M13 2c2 2 2 4 0 6" fill="none" stroke="#e8b83a" />
                    </Svg>
                    <Svg>
                        <path d="M2 7a6 5.5 0 0 1 12 0z" fill="#c05a5a" />
                        <path d="M8 7v7M4 14h8" stroke="#ddd" strokeWidth="1.5" />
                    </Svg>
                    <Svg>
                        <rect x="1" y="1" width="14" height="10" fill="#b9c2cf" />
                        <path d="M1 14.5h6M9 14.5h6" stroke="#3d78c4" strokeWidth="2" />
                    </Svg>
                </TrayIcons>
                <TrayIcons $w={54}>
                    <Svg>
                        <rect x="4" y="3" width="9" height="12" fill="#9fd98c" stroke="#eee" />
                        <path d="M6 0v3M10 0v3" stroke="#eee" />
                    </Svg>
                    <Svg>
                        <rect x="1" y="1" width="10" height="9" fill="#3d78c4" stroke="#ddd" />
                        <circle cx="11" cy="11" r="4" fill="#4aa54a" />
                    </Svg>
                    <Svg>
                        <path d="M2 6h3l3-3v10l-3-3H2z" fill="#ddd" />
                        <path d="M10 5c1.5 1.5 1.5 4.5 0 6M12.5 3.5c2.5 2.5 2.5 6.5 0 9" fill="none" stroke="#8fc6ea" />
                    </Svg>
                </TrayIcons>
                <Clock>16:16</Clock>
            </Tray>
        </Taskbar>
        <Pointer width="16" height="16" viewBox="0 0 16 16">
            <path d="M5.5 1.5h5v4h4v5h-4v4h-5v-4h-4v-5h4z" fill="#fff" stroke="#000" />
        </Pointer>
    </Page>
);

export default App;
